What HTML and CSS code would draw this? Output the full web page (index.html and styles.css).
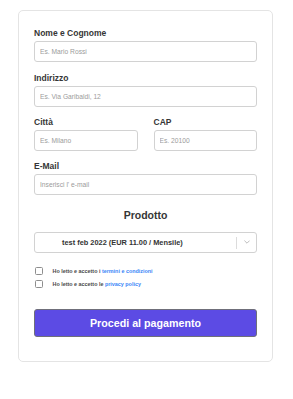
FILE: index.html
```html
<!DOCTYPE html>
<html lang="it">
<head>
<meta charset="utf-8">
<link rel="stylesheet" href="styles.css">
</head>
<body>
<div class="page">
  <form class="card">
    <div class="field">
      <label class="label">Nome e Cognome</label>
      <input class="input" type="text" placeholder="Es. Mario Rossi">
    </div>
    <div class="field">
      <label class="label">Indirizzo</label>
      <input class="input" type="text" placeholder="Es. Via Garibaldi, 12">
    </div>
    <div class="field row">
      <div class="col">
        <label class="label">Città</label>
        <input class="input" type="text" placeholder="Es. Milano">
      </div>
      <div class="col">
        <label class="label">CAP</label>
        <input class="input" type="text" placeholder="Es. 20100">
      </div>
    </div>
    <div class="field">
      <label class="label">E-Mail</label>
      <input class="input" type="text" placeholder="Inserisci l' e-mail">
    </div>
    <div class="product-title">Prodotto</div>
    <div class="select">
      <div class="select-value">test feb 2022 (EUR 11.00 / Mensile)</div>
      <span class="select-sep"></span>
      <div class="select-arrow">
        <svg width="6" height="4" viewBox="0 0 6 4"><path d="M0.4 0.6 L3 3.2 L5.6 0.6" fill="none" stroke="#a0a0a0" stroke-width="0.7"/></svg>
      </div>
    </div>
    <div class="checks">
      <label class="check"><span class="box"></span><span class="check-text">Ho letto e accetto i <a class="link">termini e condizioni</a></span></label>
      <label class="check"><span class="box"></span><span class="check-text">Ho letto e accetto le <a class="link">privacy policy</a></span></label>
    </div>
    <button class="submit" type="button">Procedi al pagamento</button>
  </form>
</div>
</body>
</html>
```

FILE: styles.css
```css
html, body {
  margin: 0;
  padding: 0;
  background: #ffffff;
}
body {
  font-family: "Liberation Sans", Arial, Helvetica, sans-serif;
  color: #363636;
}
.page {
  padding: 10px 0 0 18px;
}
.card {
  box-sizing: border-box;
  width: 255px;
  height: 352px;
  border: 1px solid #e4e4e4;
  border-radius: 5px;
  padding: 17.3px 15px 0 15px;
  display: flex;
  flex-direction: column;
}
.field {
  display: flex;
  flex-direction: column;
  margin-bottom: 10.33px;
}
.row {
  display: grid;
  grid-template-columns: 1fr 1fr;
  column-gap: 16px;
}
.col {
  display: flex;
  flex-direction: column;
}
.label {
  font-size: 8.5px;
  line-height: 10px;
  font-weight: bold;
  color: #363636;
  margin-bottom: 3px;
}
.input {
  box-sizing: border-box;
  width: 100%;
  height: 21px;
  margin: 0;
  border: 1px solid #d2d2d2;
  border-radius: 3px;
  padding: 0 5px;
  font-family: "Liberation Sans", Arial, sans-serif;
  font-size: 6.7px;
  color: #363636;
  background: #fff;
  outline: none;
}
.input::placeholder {
  color: #9b9b9b;
}
.product-title {
  margin-top: 3.8px;
  text-align: center;
  font-size: 10.5px;
  line-height: 13px;
  font-weight: bold;
  color: #363636;
}
.select {
  margin-top: 9.3px;
  box-sizing: border-box;
  height: 21px;
  border: 1px solid #d2d2d2;
  border-radius: 3px;
  display: flex;
  align-items: center;
}
.select-value {
  flex: 1;
  padding-left: 27px;
  font-size: 7.4px;
  font-weight: bold;
  color: #333;
}
.select-sep {
  align-self: stretch;
  width: 1px;
  background: #dcdcdc;
  margin: 4px 0 3px;
}
.select-arrow {
  width: 19px;
  display: flex;
  justify-content: center;
  align-items: center;
}
.select-arrow svg {
  display: block;
}
.checks {
  margin-top: 12.8px;
  display: flex;
  flex-direction: column;
  gap: 3.8px;
}
.check {
  height: 10px;
  display: flex;
  align-items: center;
}
.box {
  box-sizing: border-box;
  width: 8px;
  height: 8px;
  border: 1px solid #8e8e8e;
  border-radius: 1.5px;
  margin-left: 0.5px;
  margin-right: 10px;
}
.check-text {
  font-size: 5.4px;
  font-weight: bold;
  color: #4a4a4a;
}
.link {
  color: #3b86f7;
}
.submit {
  margin-top: 20px;
  box-sizing: border-box;
  width: 100%;
  height: 28px;
  border: 1px solid #6f6f7a;
  border-radius: 3px;
  background: #5c4be4;
  color: #ffffff;
  font-family: "Liberation Sans", Arial, sans-serif;
  font-size: 10.7px;
  font-weight: bold;
  padding: 0;
  display: flex;
  align-items: center;
  justify-content: center;
}
```
